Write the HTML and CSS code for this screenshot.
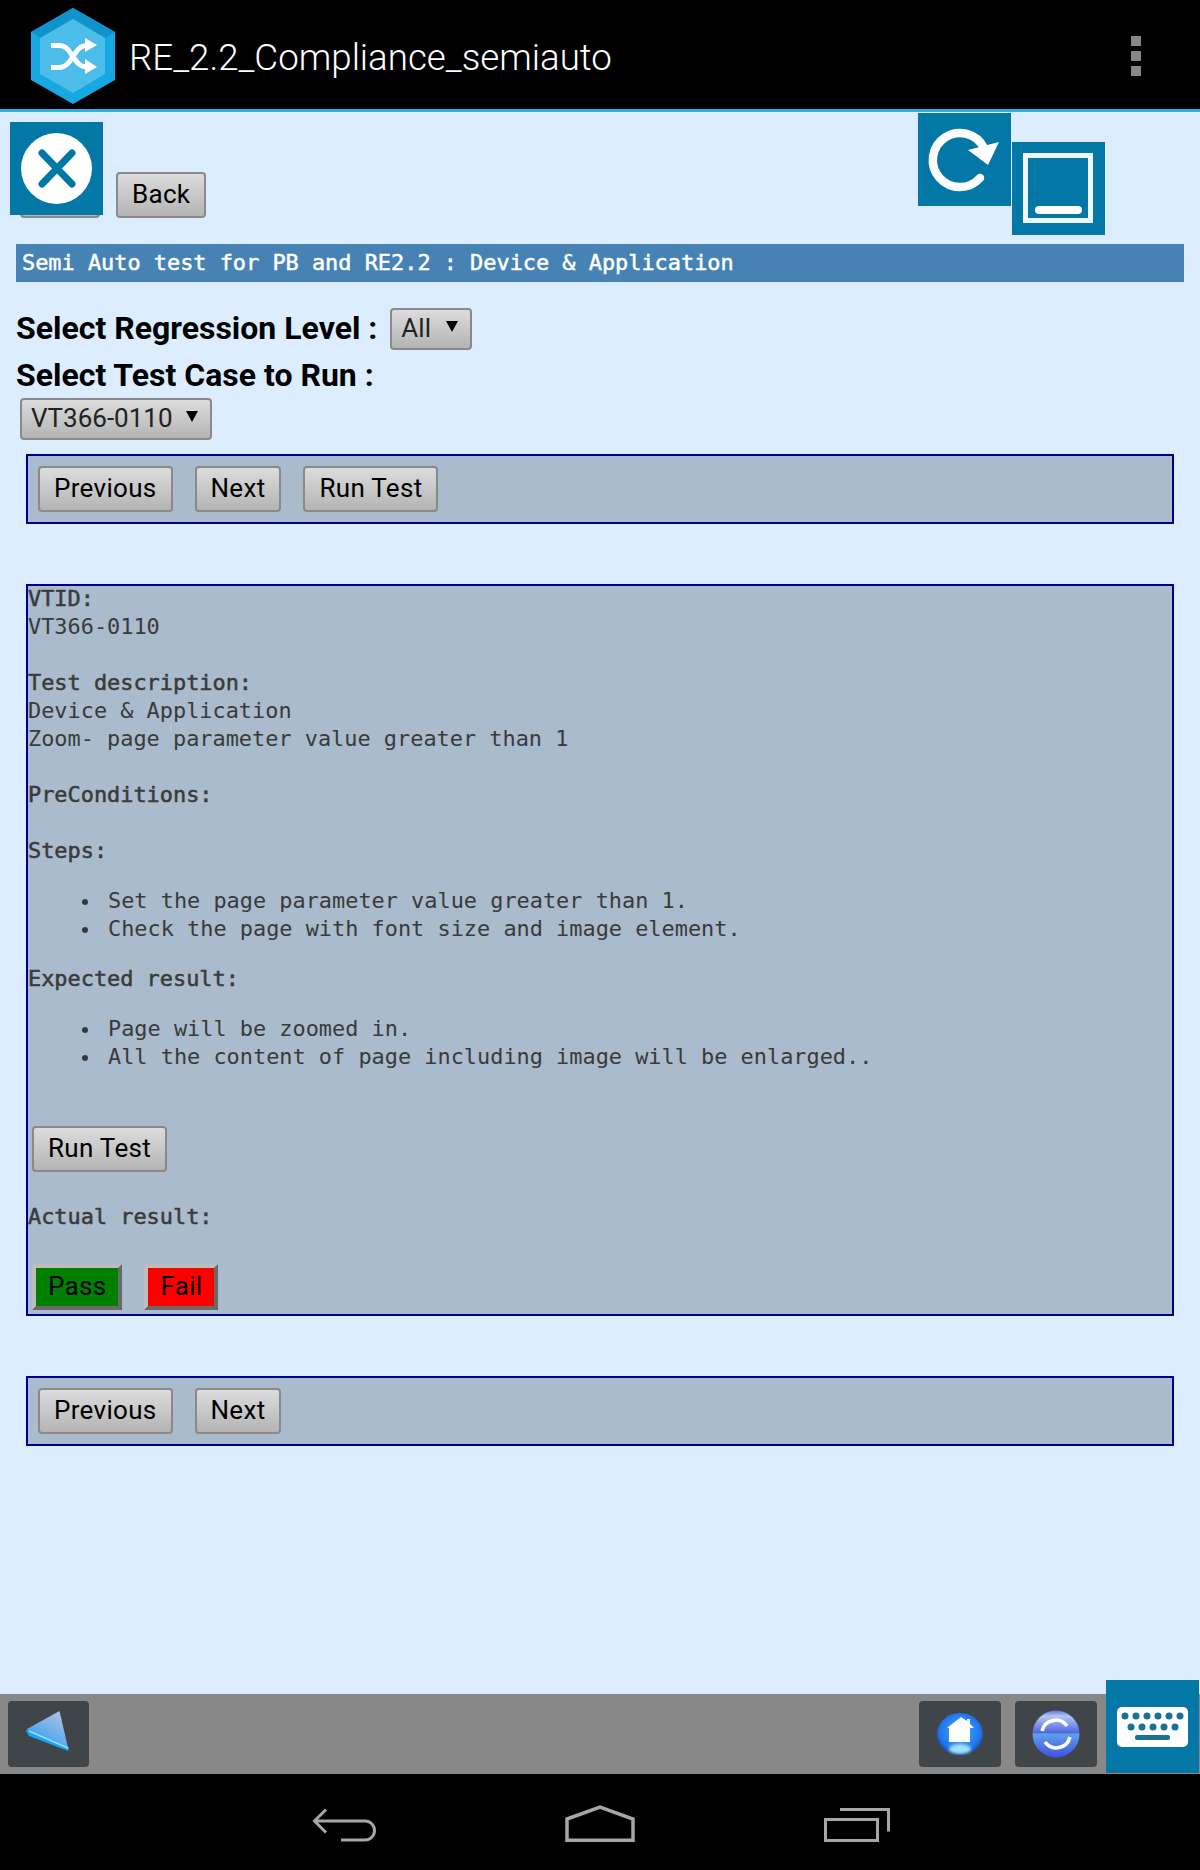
FILE: index.html
```html
<!DOCTYPE html>
<html lang="en">
<head>
<meta charset="UTF-8">
<title>RE_2.2_Compliance_semiauto</title>
<link rel="stylesheet" href="styles.css">
</head>
<body>

<svg class="svg-defs" width="0" height="0">
  <defs>
    <filter id="soft" x="-10%" y="-10%" width="120%" height="120%">
      <feGaussianBlur stdDeviation="0.7"/>
    </filter>
    <filter id="softer" x="-30%" y="-30%" width="160%" height="160%">
      <feGaussianBlur stdDeviation="1.6"/>
    </filter>
  </defs>
</svg>

<header class="action-bar">
  <svg class="app-logo" viewBox="0 0 84 96">
    <polygon points="42,0 84,24 84,72 42,96 0,72 0,24" fill="#17a7e2"/>
    <polygon points="42,0 84,24 74,30 42,11 10,30 0,24" fill="#0f93ca"/>
    <polygon points="42,11 74,30 74,66 42,85 9,66 9,30" fill="#4cbde9"/>
    <g fill="none" stroke="#fff" stroke-width="5">
      <path d="M20 37.500h8c7 0 10 5 14 11s7 10.500 14 10.500"/>
      <path d="M20 59.500h8c7 0 10-5 14-11s7-11 14-11"/>
    </g>
    <polygon points="54,30 66,37 54,44" fill="#fff"/>
    <polygon points="54,51 66,59 54,66" fill="#fff"/>
  </svg>
  <div class="app-title">RE_2.2_Compliance_semiauto</div>
  <div class="overflow-menu"><span></span><span></span><span></span></div>
</header>

<main class="page">
  <div class="top-row">
    <button class="btn btn-hidden">Home</button>
    <button class="btn">Back</button>
  </div>

  <div class="title-band">Semi Auto test for PB and RE2.2 : Device &amp; Application</div>

  <div class="select-row">
    <label class="select-label">Select Regression Level :</label>
    <div class="fake-select select-all">All<span class="arrow"></span></div>
  </div>
  <label class="select-label label-block">Select Test Case to Run :</label>
  <div class="fake-select select-case">VT366-0110<span class="arrow"></span></div>

  <div class="panel nav-panel">
    <button class="btn">Previous</button>
    <button class="btn">Next</button>
    <button class="btn">Run Test</button>
  </div>

  <div class="panel details">
    <div class="heading">VTID:</div>
    <div>VT366-0110</div>
    <div class="heading gap">Test description:</div>
    <div>Device &amp; Application</div>
    <div>Zoom- page parameter value greater than 1</div>
    <div class="heading gap">PreConditions:</div>
    <div class="heading gap">Steps:</div>
    <ul>
      <li>Set the page parameter value greater than 1.</li>
      <li>Check the page with font size and image element.</li>
    </ul>
    <div class="heading">Expected result:</div>
    <ul>
      <li>Page will be zoomed in.</li>
      <li>All the content of page including image will be enlarged..</li>
    </ul>
    <button class="btn run-btn">Run Test</button>
    <div class="heading actual">Actual result:</div>
    <div class="verdict-row">
      <button class="verdict pass">Pass</button>
      <button class="verdict fail">Fail</button>
    </div>
  </div>

  <div class="panel nav-panel bottom-nav">
    <button class="btn">Previous</button>
    <button class="btn">Next</button>
  </div>
</main>

<div class="tool-bar">
  <div class="tool-btn">
    <svg width="46" height="46" viewBox="0 0 46 46">
      <defs>
        <linearGradient id="triTop" x1="0.8" y1="0" x2="0.25" y2="0.9">
          <stop offset="0" stop-color="#b4c2e0"/>
          <stop offset="1" stop-color="#2f9ff5"/>
        </linearGradient>
      </defs>
      <polygon points="33.500,0 42.500,39 1,18" fill="url(#triTop)" filter="url(#soft)"/>
      <polygon points="1,18 42.500,36 42.500,40 3,25 0,20" fill="#12a6fb" filter="url(#soft)"/>
      <path d="M3 20l39 17" stroke="#a8dcfa" stroke-width="1.500"/>
    </svg>
  </div>
  <div class="tool-right">
    <div class="tool-btn">
      <svg width="46" height="42" viewBox="0 0 46 42">
        <defs>
          <radialGradient id="homeBall" cx="0.5" cy="0.45" r="0.55">
            <stop offset="0" stop-color="#58acfa"/>
            <stop offset="0.8" stop-color="#1c76ee"/>
            <stop offset="1" stop-color="#1c4ca6"/>
          </radialGradient>
        </defs>
        <ellipse cx="23" cy="21" rx="23" ry="21" fill="url(#homeBall)" filter="url(#soft)"/>
        <ellipse cx="23" cy="36" rx="11" ry="5" fill="#9fe0fb" filter="url(#softer)"/>
        <polygon points="24,4 30,8 30,6 33,6 33,11 37,15 33,15 33,29 12,29 12,15 10,15" fill="#fff" filter="url(#soft)"/>
      </svg>
    </div>
    <div class="tool-btn">
      <svg width="48" height="48" viewBox="0 0 48 48">
        <defs>
          <linearGradient id="syncBall" x1="0" y1="0" x2="0" y2="1">
            <stop offset="0" stop-color="#5a76e0"/>
            <stop offset="0.12" stop-color="#b5c6f0"/>
            <stop offset="0.47" stop-color="#4f66e2"/>
            <stop offset="0.5" stop-color="#5fa0ea"/>
            <stop offset="1" stop-color="#3f4fe0"/>
          </linearGradient>
        </defs>
        <circle cx="24" cy="24" r="23.500" fill="url(#syncBall)" filter="url(#soft)"/>
        <g fill="none" stroke="#fff" stroke-width="3.500" filter="url(#soft)">
          <path d="M10 21a14 14 0 0 1 25-5"/>
          <path d="M38 27a14 14 0 0 1-25 5"/>
        </g>
      </svg>
    </div>
  </div>
</div>

<nav class="system-nav">
  <svg width="64" height="34" viewBox="0 0 64 34">
    <path d="M14 1.500L2.500 13 14 24.500M3 13h50a9.500 9.500 0 0 1 0 19H29" fill="none" stroke="#a6a6a6" stroke-width="3"/>
  </svg>
  <svg class="nav-home" width="70" height="37" viewBox="0 0 70 37">
    <path d="M2 14L35 2l33 12v21.300H2z" fill="none" stroke="#a6a6a6" stroke-width="3.500"/>
  </svg>
  <svg width="66" height="34" viewBox="0 0 66 34">
    <path d="M1.500 11.500h52v21h-52zM16 1.500h48.500v22" fill="none" stroke="#a6a6a6" stroke-width="3"/>
  </svg>
</nav>

<!-- floating window controls, they sit on top of the page -->
<div class="float-btn close-btn">
  <svg width="93" height="93" viewBox="0 0 93 93">
    <g filter="url(#soft)">
      <circle cx="46.500" cy="46.500" r="35.500" fill="#fff"/>
      <path d="M32 31l30 31M62 31L32 62" stroke="#0377a5" stroke-width="7" stroke-linecap="round"/>
    </g>
  </svg>
</div>
<div class="float-btn refresh-btn">
  <svg width="93" height="93" viewBox="0 0 93 93">
    <g filter="url(#soft)">
      <path d="M62 65A27 27 0 1 1 66 35" fill="none" stroke="#fff" stroke-width="8.500" stroke-linecap="round"/>
      <polygon points="50,37 81,29 70,52" fill="#fff"/>
    </g>
  </svg>
</div>
<div class="float-btn minimize-btn">
  <svg width="93" height="93" viewBox="0 0 93 93">
    <g filter="url(#soft)">
      <rect x="13.500" y="13.500" width="65" height="65" fill="none" stroke="#eef6f9" stroke-width="5"/>
      <rect x="23" y="64" width="47" height="8" rx="4" fill="#fff"/>
    </g>
  </svg>
</div>
<div class="float-btn keyboard-btn">
  <svg width="93" height="93" viewBox="0 0 93 93">
    <g filter="url(#soft)">
      <rect x="11" y="27" width="71" height="40" rx="5" fill="#fff"/>
      <g fill="#1c6f98">
        <circle cx="19" cy="36" r="3.500"/><circle cx="30" cy="36" r="3.500"/><circle cx="41" cy="36" r="3.500"/>
        <circle cx="52" cy="36" r="3.500"/><circle cx="63" cy="36" r="3.500"/><circle cx="74" cy="36" r="3.500"/>
        <circle cx="25" cy="47" r="3.500"/><circle cx="36" cy="47" r="3.500"/><circle cx="47" cy="47" r="3.500"/>
        <circle cx="58" cy="47" r="3.500"/><circle cx="69" cy="47" r="3.500"/>
        <rect x="29" y="55" width="35" height="5" rx="2"/>
      </g>
    </g>
  </svg>
</div>

</body>
</html>
```

FILE: styles.css
```css
html, body {
  margin: 0;
  padding: 0;
}

body {
  width: 1200px;
  height: 1870px;
  display: flex;
  flex-direction: column;
  background-color: #dbedff;
  font-family: Roboto, sans-serif;
  overflow: hidden;
}

.svg-defs {
  position: absolute;
}

.action-bar {
  height: 106px;
  padding-top: 3px;
  flex-shrink: 0;
  display: flex;
  align-items: center;
  background-color: #000;
  border-bottom: 3px solid #2ab3e3;
}

.app-logo {
  width: 84px;
  height: 96px;
  margin-left: 31px;
  margin-right: 14px;
}

.app-title {
  flex: 1;
  color: #fff;
  font-size: 36.700px;
  font-weight: 300;
  padding-top: 2px;
}

.overflow-menu {
  display: flex;
  flex-direction: column;
  gap: 5px;
  margin-right: 59px;
}

.overflow-menu span {
  width: 10px;
  height: 10px;
  background-color: #888;
}

.page {
  flex: 1;
  padding: 60px 16px 0;
}

.btn {
  height: 46px;
  padding: 0 14px 2px;
  font-family: Roboto, sans-serif;
  font-size: 26px;
  letter-spacing: 0.3px;
  color: #000;
  background: linear-gradient(#dcdcdc, #b4b4b4);
  border: 2px solid #8a8a8a;
  border-radius: 4px;
}

.top-row {
  display: flex;
  gap: 16px;
  margin-left: 4px;
}

.btn-hidden {
  width: 80px;
  color: transparent;
}

.title-band {
  margin-top: 26px;
  height: 38px;
  line-height: 38px;
  padding-left: 6px;
  background-color: #4682b4;
  color: #fff;
  font-family: "DejaVu Sans Mono", monospace;
  font-size: 21.900px;
  -webkit-text-stroke: 0.5px #fff;
}

.select-row {
  display: flex;
  align-items: center;
  gap: 13px;
  margin-top: 26px;
}

.select-label {
  font-size: 32px;
  font-weight: bold;
  line-height: 38px;
  color: #000;
}

.select-row .select-label {
  margin-bottom: 2px;
}

.label-block {
  display: block;
  margin-top: 6px;
  height: 38px;
}

.fake-select {
  box-sizing: border-box;
  display: flex;
  align-items: center;
  justify-content: space-between;
  height: 42px;
  padding: 0 12px 2px 9px;
  font-size: 26px;
  color: #222;
  background: linear-gradient(#dcdcdc, #b4b4b4);
  border: 2px solid #8a8a8a;
  border-radius: 4px;
}

.select-all {
  width: 82px;
}

.select-case {
  width: 192px;
  margin: 4px 0 0 4px;
}

.arrow {
  width: 0;
  height: 0;
  margin-bottom: 4px;
  border-left: 6px solid transparent;
  border-right: 6px solid transparent;
  border-top: 11px solid #000;
}

.panel {
  margin: 0 10px;
  background-color: #a9bbcc;
  border: 2px solid #00008b;
}

.nav-panel {
  box-sizing: border-box;
  height: 70px;
  margin-top: 14px;
  display: flex;
  align-items: center;
  gap: 22px;
  padding-left: 10px;
}

.details {
  box-sizing: border-box;
  height: 732px;
  margin-top: 60px;
  font-family: "DejaVu Sans Mono", monospace;
  font-size: 21.900px;
  line-height: 28px;
  color: #3a3a3a;
}

.details > :first-child {
  margin-top: -1px;
}

.heading {
  -webkit-text-stroke: 0.5px #3a3a3a;
}

.gap {
  margin-top: 28px;
}

.details ul {
  margin: 22px 0;
  padding-left: 80px;
  list-style: none;
}

.details li {
  position: relative;
}

.details li::before {
  content: "";
  position: absolute;
  left: -26px;
  top: 12px;
  width: 6px;
  height: 6px;
  border-radius: 50%;
  background-color: #3a3a3a;
}

.run-btn {
  display: block;
  margin: 55px 0 0 4px;
}

.actual {
  margin-top: 31px;
}

.verdict-row {
  display: flex;
  gap: 22px;
  margin: 33px 0 0 4px;
}

.verdict {
  height: 46px;
  padding: 0 12px 2px;
  font-family: Roboto, sans-serif;
  font-size: 26px;
  letter-spacing: 0.3px;
  color: #000;
  border: 4px outset #bdbdbd;
}

.pass {
  background-color: #008000;
}

.fail {
  background-color: #f00;
}

.bottom-nav {
  margin-top: 60px;
}

.tool-bar {
  height: 80px;
  flex-shrink: 0;
  display: flex;
  justify-content: space-between;
  align-items: center;
  padding: 0 103px 0 8px;
  background-color: #888;
}

.tool-right {
  display: flex;
  gap: 14px;
}

.tool-btn {
  width: 81px;
  height: 66px;
  display: flex;
  align-items: center;
  justify-content: center;
  background-color: #40454a;
  border-radius: 4px;
}

.tool-right .tool-btn {
  width: 82px;
}

.system-nav {
  height: 91px;
  padding-top: 5px;
  flex-shrink: 0;
  display: flex;
  align-items: center;
  padding-left: 312px;
  gap: 189px;
  background-color: #000;
}

.nav-home {
  margin-bottom: 3px;
}

.float-btn {
  position: absolute;
  width: 93px;
  height: 93px;
  background-color: #0377a5;
}

.close-btn {
  left: 10px;
  top: 122px;
}

.refresh-btn {
  left: 918px;
  top: 113px;
}

.minimize-btn {
  left: 1012px;
  top: 142px;
}

.keyboard-btn {
  left: 1106px;
  top: 1680px;
}
```
